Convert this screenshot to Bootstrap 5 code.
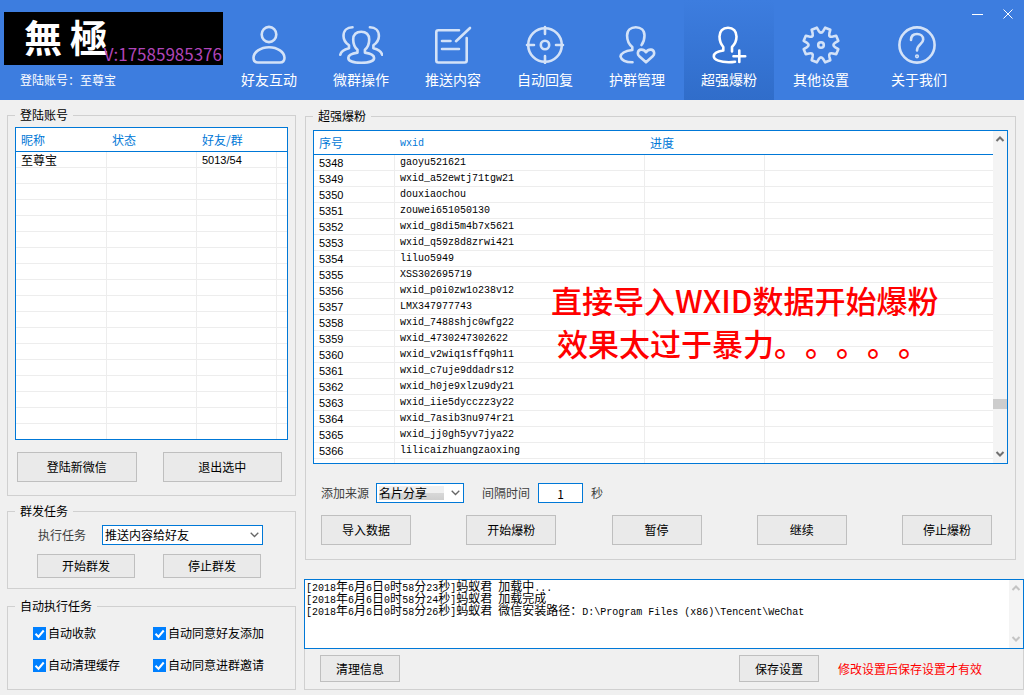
<!DOCTYPE html>
<html lang="zh-CN">
<head>
<meta charset="utf-8">
<meta name="viewport" content="width=device-width, initial-scale=1">
<title>無極</title>
<link rel="stylesheet" href="https://cdn.jsdelivr.net/npm/bootstrap@5.3.0/dist/css/bootstrap.min.css">
<style>
  :root { --accent: #0078d7; --face: #f0f0f0; --edge: #d0d0d0; --grid: #ededed; }
  body { background: var(--face); color: #000; font: 12px/14px "Noto Sans CJK SC", sans-serif; }
  .mono { font-family: "Liberation Mono", monospace; font-size: 10px; }
  .num { font-family: "Liberation Sans", sans-serif; font-size: 11px; }

  /* title bar */
  .titlebar { background: #3d7ddf; height: 100px; color: #fff; }
  .brand-col { width: 224px; padding: 12px 0 0 4px; }
  .logo-box { background: #000; width: 219px; height: 53px; }
  .logo-name { font: 700 38px/48px "Noto Sans CJK TC", sans-serif; padding-left: 20px; }
  .logo-name span + span { margin-left: 8px; }
  .logo-contact { right: 1px; bottom: 0; font-size: 17px; line-height: 22px; color: #b045b8; }
  .tool { width: 90px; padding: 24px 0 0; margin-right: 2px; color: #fff; font-size: 14px; line-height: 20px; text-decoration: none; text-align: center; }
  .tool:hover { color: #fff; }
  .tool svg { display: block; margin: 0 auto 5px; fill: none; stroke: #d3e2f8; stroke-width: 2.6; stroke-linecap: round; stroke-linejoin: round; }
  .tool.active { background: linear-gradient(#3d7ddf, #306dca); }
  .tool.active svg { stroke: #fff; }
  .tool-last { width: 102px; margin-right: 0; }
  .win-btn { background: none; border: 0; padding: 9px 0; line-height: 0; }
  .win-btn svg { stroke: #fff; fill: none; }
  .win-buttons { gap: 19px; padding-right: 11px; }

  /* framed groups */
  .side { width: 289px; flex: none; margin: 8px 8px 0 7px; }
  .frame { border: 1px solid var(--edge); padding: 5px 7px 0; margin: 0; min-width: 0; }
  .frame legend { font-size: 12px; line-height: 14px; padding: 0 5px; }
  .grid-box { border: 1px solid var(--accent); background: #fff; overflow: hidden; }
  .grid-box table { width: 100%; table-layout: fixed; border-collapse: separate; border-spacing: 0; }
  .grid-box th { height: 24px; padding: 0 5px; color: var(--accent); font-weight: 400; border-bottom: 1px solid var(--accent); }
  .grid-box td { height: 16px; line-height: 14px; padding: 1px 5px 0; border: 0 solid var(--grid); border-width: 0 1px 1px 0; white-space: nowrap; }
  .grid-box td:last-child { border-right: 0; }
  .accounts { height: 313px; }
  .queue { height: 334px; }
  .btn-flat { background: #eaeaea; border: 1px solid #bfbfbf; border-radius: 0; color: #000; font-size: 12px; line-height: 14px; padding: 0; height: 30px; }
  .btn-flat:hover { background: #e5f1fb; border-color: var(--accent); }
  .btn-short { height: 24px; }
  .btn-mid { height: 27px; width: 80px; }
  .w-narrow { width: 90px; }
  .soft { color: #404040; }
  .pick, .entry { border: 1px solid var(--accent); border-radius: 0; height: 20px; font-size: 12px; line-height: 16px; padding: 0 2px; background-color: #fff; color: #000; }
  .pick { background-image: url("data:image/svg+xml,%3Csvg xmlns='http://www.w3.org/2000/svg' viewBox='0 0 9 6'%3E%3Cpath d='M.7.8 4.5 4.5 8.3.8' fill='none' stroke='%23666' stroke-width='1.3'/%3E%3C/svg%3E"); background-size: 9px 6px; background-position: right 3px center; }
  .pick-lit { background-image: url("data:image/svg+xml,%3Csvg xmlns='http://www.w3.org/2000/svg' viewBox='0 0 9 6'%3E%3Cpath d='M.7.8 4.5 4.5 8.3.8' fill='none' stroke='%23666' stroke-width='1.3'/%3E%3C/svg%3E"), linear-gradient(#f0f0f0 50%, #d8d8d8 50%, #cfcfcf); background-size: 9px 6px, 65px 14px; background-position: right 3px center, 2px 2px; background-repeat: no-repeat; }
  .tick { display: flex; align-items: center; gap: 2px; margin: 0; padding: 0; min-height: 0; }
  .tick .form-check-input { width: 13px; height: 13px; margin: 0; float: none; border: 0; border-radius: 0; }
  .tick .form-check-input:checked { background-color: #0080ff; background-size: 16px 16px; background-image: url("data:image/svg+xml,%3Csvg xmlns='http://www.w3.org/2000/svg' viewBox='0 0 16 16'%3E%3Cpath d='M4 8.200 7 11.200 12.200 5' fill='none' stroke='%23fff' stroke-width='2'/%3E%3C/svg%3E"); background-position: center; }
  .ticks { display: grid; grid-template-columns: 120px 1fr; row-gap: 18px; padding: 8px 0 17px 18px; }
  .pair { gap: 26px; padding: 12px 6px 13px 2px; }
  .task-row { padding: 2px 25px 0 23px; gap: 16px; }
  .task-row label { white-space: nowrap; }
  .task-buttons { gap: 28px; padding: 9px 27px 10px 22px; }
  .auto-frame { margin-top: 10px; }
  .work { min-width: 0; }
  .blast { margin: 9px 8px 19px 1px; padding-top: 7px; }
  .options { padding: 19px 0 0 8px; }
  .options .pick { width: 88px; margin-left: 7px; }
  .gap-label { margin-left: 18px; }
  .entry { width: 45px; margin-left: 8px; }
  .actions { padding: 12px 16px 14px 8px; }

  /* scroll bars */
  .bar { width: 14px; background: #f4f4f4; flex: none; }
  .bar svg { display: block; fill: none; stroke: #707070; stroke-width: 2; }
  .bar-thumb { height: 10px; background: #cdcdcd; }
  .bar-off svg { stroke: #c4c4c4; }

  .notice { left: 237px; top: 147px; font-size: 31px; font-weight: 500; line-height: 43px; color: #f00; white-space: nowrap; text-spacing-trim: space-all; font-kerning: none; font-feature-settings: "chws" 0, "halt" 0; }
  .notice-sub { margin-left: 6px; }
  .log-box { border: 1px solid var(--accent); background: #fff; height: 70px; }
  .log-text { line-height: 12px; padding-left: 1px; }
  .log-text .mono { line-height: 0; }
  .log-foot { border: 1px solid var(--edge); border-top: 0; padding: 6px 41px 7px 15px; }
  .warn { color: #f00; margin-left: 19px; }
</style>
</head>
<body>
<header class="titlebar d-flex">
  <div class="brand-col flex-shrink-0">
    <div class="logo-box position-relative">
      <div class="logo-name"><span>無</span><span>極</span></div>
      <div class="logo-contact position-absolute">V:17585985376</div>
    </div>
    <div class="ps-3 pt-2">登陆账号：至尊宝</div>
  </div>
  <nav class="d-flex">
    <a class="tool" href="#"><svg width="44" height="40"><ellipse cx="22" cy="10.5" rx="7.3" ry="7.6"/><path d="M22 23.200c8.500 0 15.500 4.800 15.500 10.600 0 3.200-1.800 4.700-4.500 4.700H11c-2.700 0-4.500-1.500-4.500-4.700C6.500 28 13.500 23.200 22 23.200z"/></svg>好友互动</a>
    <a class="tool" href="#"><svg width="44" height="40"><path d="M18.500 28.600C12 29.500 9.300 31.500 9.300 34c0 2.900 5.400 4.700 12.900 4.700s12.900-1.800 12.900-4.700c0-2.500-2.700-4.500-9.200-5.400v-2.800c3-2.500 4.300-6 4.300-10.300 0-5-3-7.800-8-7.800s-8 2.800-8 7.800c0 4.300 1.300 7.800 4.300 10.300z"/><path d="M13.500 3.300C8 3.300 4.500 6.500 4.500 12c0 4 1.800 6.700 5.500 9.300v3C5 25.500 2 27.300 1.300 30.800M30.900 3.300c5.500 0 9 3.200 9 8.700 0 4-1.800 6.700-5.500 9.300v3c5 1.200 8 3 8.700 6.500"/></svg>微群操作</a>
    <a class="tool" href="#"><svg width="44" height="40"><path d="M28 6.200H7.300a2 2 0 0 0-2 2v28.300a2 2 0 0 0 2 2h26.400a2 2 0 0 0 2-2V14M39 4 25 17.200M11 17h8.500M11 25h17"/></svg>推送内容</a>
    <a class="tool" href="#"><svg width="44" height="40"><circle cx="22" cy="21" r="16.8"/><circle cx="22" cy="21" r="4.2"/><path d="M22 3v7M22 32v7M4 21h7M33 21h7"/></svg>自动回复</a>
    <a class="tool" href="#"><svg width="44" height="40"><path d="M26.500 21c2-2.500 3-6 3-9.500 0-5.300-3.500-8.300-8.700-8.300s-8.700 3-8.700 8.300c0 4.800 1.600 8.700 5.200 11.500v3C10 27 6 29.300 5.500 32.500c.8 3.500 5.500 5.800 12 5.800"/><path d="M31 38.300l-7-6.300c-2-2.200-1.300-6 2-6.400 2.200-.2 3.800.8 5 2.600 1.200-1.800 2.800-2.800 5-2.600 3.300.4 4 4.200 2 6.400z"/></svg>护群管理</a>
    <a class="tool active" href="#" aria-current="page"><svg width="44" height="40"><path d="M25 27.500V23c3-3 4.500-6.500 4.500-10.500 0-5.300-3.200-8.800-8.500-8.800s-8.500 3.500-8.500 8.800c0 4 1.300 7.500 3.800 10.500v3.500c-6 .8-9.500 2.800-9.500 5.700 0 3.800 7 6 15 6 2.500 0 4.500-.2 6.200-.5M32.300 26.500v11.500M26.500 32.200h11.700"/></svg>超强爆粉</a>
    <a class="tool" href="#"><svg width="44" height="40"><path id="gear"/><circle cx="22" cy="21" r="2.8"/></svg>其他设置</a>
    <a class="tool tool-last" href="#"><svg width="44" height="40"><circle cx="20" cy="21" r="17.6"/><path d="M14 16c0-4 2.500-6 6-6s6.200 2.200 6.200 5.500c0 4.500-6.200 5-6.200 11"/><circle cx="20" cy="32.3" r=".8"/></svg>关于我们</a>
  </nav>
  <div class="ms-auto d-flex align-items-start win-buttons">
    <button class="win-btn" type="button" aria-label="最小化"><svg width="12" height="10"><path d="M0 5.500h11"/></svg></button>
    <button class="win-btn" type="button" aria-label="关闭"><svg width="10" height="10"><path d="M.5.500l9 9M9.500.500l-9 9"/></svg></button>
  </div>
</header>

<main class="d-flex">
  <div class="side">
    <fieldset class="frame mb-2">
      <legend class="float-none w-auto mb-0">登陆账号</legend>
      <div class="grid-box accounts">
        <table>
          <colgroup><col style="width:91px"><col style="width:90px"><col style="width:80px"><col></colgroup>
          <thead><tr><th>昵称</th><th>状态</th><th>好友/群</th><th></th></tr></thead>
          <tbody id="accountRows"></tbody>
        </table>
      </div>
      <div class="d-flex pair">
        <button class="btn btn-flat col" type="button">登陆新微信</button>
        <button class="btn btn-flat col" type="button">退出选中</button>
      </div>
    </fieldset>

    <fieldset class="frame">
      <legend class="float-none w-auto mb-0">群发任务</legend>
      <div class="d-flex align-items-center task-row">
        <label class="soft" for="task">执行任务</label>
        <select class="form-select pick" id="task"><option>推送内容给好友</option></select>
      </div>
      <div class="d-flex task-buttons">
        <button class="btn btn-flat btn-short col" type="button">开始群发</button>
        <button class="btn btn-flat btn-short col" type="button">停止群发</button>
      </div>
    </fieldset>

    <fieldset class="frame auto-frame">
      <legend class="float-none w-auto mb-0">自动执行任务</legend>
      <div class="ticks">
        <div class="form-check tick"><input class="form-check-input" type="checkbox" id="c1" checked><label for="c1">自动收款</label></div>
        <div class="form-check tick"><input class="form-check-input" type="checkbox" id="c2" checked><label for="c2">自动同意好友添加</label></div>
        <div class="form-check tick"><input class="form-check-input" type="checkbox" id="c3" checked><label for="c3">自动清理缓存</label></div>
        <div class="form-check tick"><input class="form-check-input" type="checkbox" id="c4" checked><label for="c4">自动同意进群邀请</label></div>
      </div>
    </fieldset>
  </div>

  <div class="flex-grow-1 work">
    <fieldset class="frame blast">
      <legend class="float-none w-auto mb-0">超强爆粉</legend>
      <div class="grid-box queue d-flex position-relative">
        <div class="flex-grow-1 overflow-hidden">
          <table>
            <colgroup><col style="width:81px"><col style="width:250px"><col style="width:120px"><col></colgroup>
            <thead><tr><th>序号</th><th><span class="mono">wxid</span></th><th>进度</th><th></th></tr></thead>
            <tbody id="queueRows"></tbody>
          </table>
        </div>
        <div class="bar d-flex flex-column" aria-hidden="true">
          <svg width="14" height="16"><path d="M3.500 10 7 6.500l3.500 3.500"/></svg>
          <div style="flex:252 0 0"></div>
          <div class="bar-thumb"></div>
          <div style="flex:36 0 0"></div>
          <svg width="14" height="18"><path d="M3.500 7 7 10.500 10.500 7"/></svg>
        </div>
        <div class="notice position-absolute">直接导入WXID数据开始爆粉<br><span class="notice-sub">效果太过于暴力。。。。。</span></div>
      </div>
      <div class="d-flex align-items-center options">
        <label class="soft" for="source">添加来源</label>
        <select class="form-select pick pick-lit" id="source"><option>名片分享</option></select>
        <label class="soft gap-label" for="delay">间隔时间</label>
        <input class="entry text-center" id="delay" type="text" value="1">
        <span class="soft ms-2">秒</span>
      </div>
      <div class="d-flex justify-content-between actions">
        <button class="btn btn-flat w-narrow" type="button">导入数据</button>
        <button class="btn btn-flat w-narrow" type="button">开始爆粉</button>
        <button class="btn btn-flat w-narrow" type="button">暂停</button>
        <button class="btn btn-flat w-narrow" type="button">继续</button>
        <button class="btn btn-flat w-narrow" type="button">停止爆粉</button>
      </div>
    </fieldset>

    <div class="log-box d-flex">
      <div class="log-text flex-grow-1" id="log" role="log"></div>
      <div class="bar bar-off d-flex flex-column justify-content-between" aria-hidden="true">
        <svg width="14" height="16"><path d="M3.500 10 7 6.500l3.500 3.500"/></svg>
        <svg width="14" height="18"><path d="M3.500 7 7 10.500 10.500 7"/></svg>
      </div>
    </div>
    <div class="log-foot d-flex align-items-center">
      <button class="btn btn-flat btn-mid me-auto" type="button">清理信息</button>
      <button class="btn btn-flat btn-mid" type="button">保存设置</button>
      <span class="warn">修改设置后保存设置才有效</span>
    </div>
  </div>
</main>

<script src="https://cdn.jsdelivr.net/npm/bootstrap@5.3.0/dist/js/bootstrap.bundle.min.js"></script>
<script>
  const ids = ["gaoyu521621", "wxid_a52ewtj71tgw21", "douxiaochou", "zouwei651050130", "wxid_g8di5m4b7x5621",
    "wxid_q59z8d8zrwi421", "liluo5949", "XSS302695719", "wxid_p0i0zw1o238v12", "LMX347977743",
    "wxid_7488shjc0wfg22", "wxid_4730247302622", "wxid_v2wiq1sffq9h11", "wxid_c7uje9ddadrs12",
    "wxid_h0je9xlzu9dy21", "wxid_iie5dycczz3y22", "wxid_7asib3nu974r21", "wxid_jj0gh5yv7jya22", "lilicaizhuangzaoxing"];
  document.getElementById("queueRows").innerHTML = ids.map((id, i) =>
    `<tr><td class="num">${5348 + i}</td><td class="mono">${id}</td><td></td><td></td></tr>`).join("") +
    "<tr><td></td><td></td><td></td><td></td></tr>";
  document.getElementById("accountRows").innerHTML =
    '<tr><td>至尊宝</td><td></td><td class="num">5013/54</td><td></td></tr>' +
    "<tr><td></td><td></td><td></td><td></td></tr>".repeat(17);

  const lines = ["[2018年6月6日0时58分23秒]蚂蚁君 加载中...", "[2018年6月6日0时58分24秒]蚂蚁君 加载完成",
    "[2018年6月6日0时58分26秒]蚂蚁君 微信安装路径：D:\\Program Files (x86)\\Tencent\\WeChat"];
  document.getElementById("log").innerHTML = lines.map(t =>
    `<div>${t.replace(/[ -~]+/g, '<span class="mono">$&</span>')}</div>`).join("");

  // eight-toothed gear: tapered teeth joined by rounded valleys
  const at = (deg, r) => {
    const a = deg * Math.PI / 180;
    return (22 + r * Math.cos(a)).toFixed(1) + " " + (21 + r * Math.sin(a)).toFixed(1);
  };
  let d = "";
  for (let mid = 22.5; mid < 360; mid += 45) {
    d += (d ? "L" : "M") + at(mid - 9, 17.8) + "L" + at(mid + 9, 17.8) + "L" + at(mid + 13, 14.5) +
      "Q" + at(mid + 22.5, 10.5) + " " + at(mid + 32, 14.5);
  }
  document.getElementById("gear").setAttribute("d", d + "z");
</script>
</body>
</html>
